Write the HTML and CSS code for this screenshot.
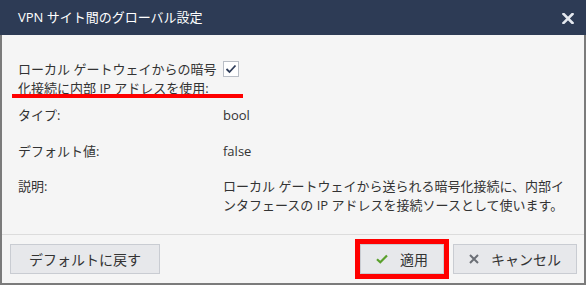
FILE: index.html
```html
<!DOCTYPE html>
<html lang="ja">
<head>
    <meta charset="UTF-8">
    <title>VPN サイト間のグローバル設定</title>
    <link rel="stylesheet" href="styles.css">
</head>
<body>
    <div class="dialog">
        <div class="title-bar">
            <span class="title">VPN サイト間のグローバル設定</span>
            <svg class="close" width="12" height="11" viewBox="0 0 12 11">
                <path d="M1.5 1 L10.5 10 M10.5 1 L1.5 10" stroke="#e4e8ef" stroke-width="2.6" stroke-linecap="square"/>
            </svg>
        </div>
        <div class="content">
            <div class="row row-main">
                <div class="label">ローカル ゲートウェイからの暗号<br>化接続に内部 IP アドレスを使用:</div>
                <div class="value">
                    <span class="checkbox">
                        <svg width="12" height="10" viewBox="0 0 12 10">
                            <path d="M1.5 5 L4.5 8 L10.5 1.5" fill="none" stroke="#2f3d5a" stroke-width="1.8"/>
                        </svg>
                    </span>
                </div>
            </div>
            <div class="row">
                <div class="label">タイプ:</div>
                <div class="value">bool</div>
            </div>
            <div class="row">
                <div class="label">デフォルト値:</div>
                <div class="value">false</div>
            </div>
            <div class="row">
                <div class="label">説明:</div>
                <div class="value desc">ローカル ゲートウェイから送られる暗号化接続に、内部イ<br>ンタフェースの IP アドレスを接続ソースとして使います。</div>
            </div>
        </div>
        <div class="footer">
            <button class="btn btn-default">デフォルトに戻す</button>
            <div class="footer-right">
                <button class="btn btn-apply">
                    <svg width="12" height="10" viewBox="0 0 12 10">
                        <path d="M1 5.2 L4.3 8.3 L11 1.5" fill="none" stroke="#5aa02c" stroke-width="2.2"/>
                    </svg>
                    適用
                </button>
                <button class="btn btn-cancel">
                    <svg width="10" height="10" viewBox="0 0 10 10">
                        <path d="M1 1 L9 9 M9 1 L1 9" stroke="#6b6f76" stroke-width="2"/>
                    </svg>
                    キャンセル
                </button>
            </div>
        </div>
    </div>
</body>
</html>
```

FILE: styles.css
```css
body {
    margin: 0;
    padding: 0;
    background-color: #fff;
    font-family: "Open Sans", "Noto Sans CJK JP", sans-serif;
    font-size: 13px;
    color: #333;
}

.dialog {
    width: 586px;
    height: 285px;
    box-sizing: border-box;
    border: 2px solid #7b7b7b;
    border-top: none;
    background-color: #f5f5f5;
    display: flex;
    flex-direction: column;
}

.title-bar {
    height: 35px;
    margin: 0 -2px;
    padding: 0 12px 0 18px;
    background-color: #2d3b55;
    display: flex;
    align-items: center;
    justify-content: space-between;
}

.title {
    color: #fff;
    font-size: 13px;
    line-height: 1;
}

.close {
    margin-top: 1px;
}

.content {
    flex: 1;
    padding: 25px 0 0 16px;
}

.row {
    display: flex;
    line-height: 19px;
    margin-bottom: 17px;
}

.row:nth-child(3) {
    margin-bottom: 16px;
}

.row-main {
    position: relative;
    margin-bottom: 8px;
}

.row-main::after {
    content: "";
    position: absolute;
    left: -6px;
    top: 34px;
    width: 231px;
    height: 4px;
    background-color: #f00;
}

.label {
    width: 205px;
    flex-shrink: 0;
}

.value {
    color: #333;
}

.checkbox {
    display: flex;
    align-items: center;
    justify-content: center;
    width: 14px;
    height: 14px;
    margin-top: 1px;
    border: 1px solid #b9bec6;
    background-color: #fff;
}

.desc {
    width: 350px;
}

.footer {
    height: 48px;
    border-top: 1px solid #dcdcdc;
    padding: 0 7px 0 8px;
    display: flex;
    align-items: center;
    justify-content: space-between;
}

.footer-right {
    display: flex;
    gap: 9px;
}

.btn {
    height: 30px;
    box-sizing: border-box;
    border: 1px solid #c9ccd2;
    background-color: #e7e8eb;
    font-family: "Open Sans", "Noto Sans CJK JP", sans-serif;
    font-size: 14px;
    color: #333;
    display: flex;
    align-items: center;
    justify-content: center;
    gap: 12px;
    padding: 0;
    cursor: pointer;
}

.btn-default {
    width: 150px;
}

.btn-apply {
    width: 84px;
    outline: 5px solid #f00;
}

.btn-cancel {
    width: 124px;
}
```
